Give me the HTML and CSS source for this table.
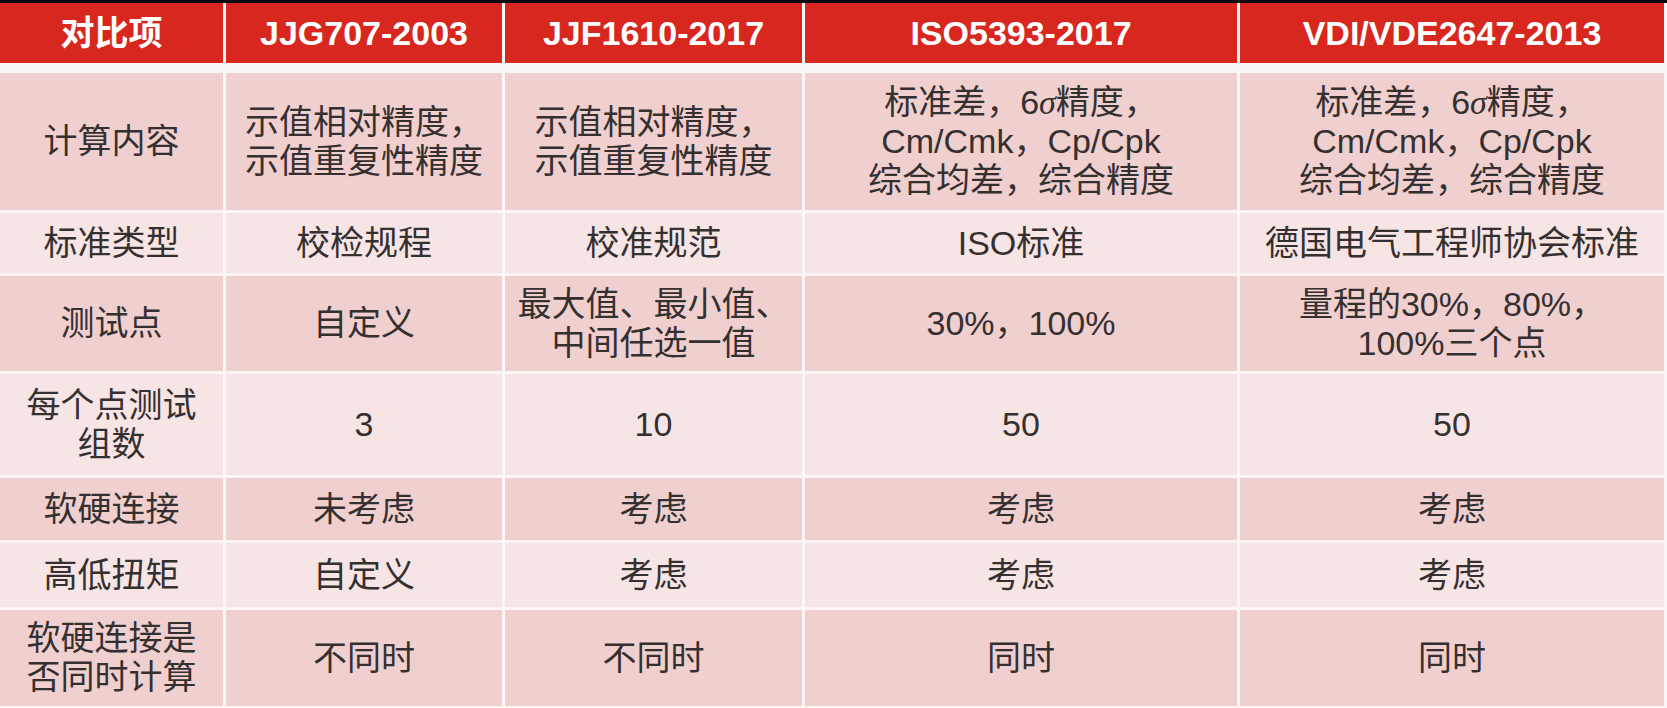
FILE: index.html
```html
<!DOCTYPE html>
<html lang="zh-CN">
<head>
<meta charset="utf-8">
<title>标准对比</title>
<link rel="stylesheet" href="styles.css">
</head>
<body>
<div class="table">
  <div class="cell head"><span>对比项</span></div>
  <div class="cell head"><span>JJG707-2003</span></div>
  <div class="cell head"><span>JJF1610-2017</span></div>
  <div class="cell head"><span>ISO5393-2017</span></div>
  <div class="cell head"><span>VDI/VDE2647-2013</span></div>

  <div class="cell dark"><span>计算内容</span></div>
  <div class="cell dark"><span>示值相对精度，<br>示值重复性精度</span></div>
  <div class="cell dark"><span>示值相对精度，<br>示值重复性精度</span></div>
  <div class="cell dark"><span>标准差，6<i class="sigma">σ</i>精度，<br>Cm/Cmk，Cp/Cpk<br>综合均差，综合精度</span></div>
  <div class="cell dark"><span>标准差，6<i class="sigma">σ</i>精度，<br>Cm/Cmk，Cp/Cpk<br>综合均差，综合精度</span></div>

  <div class="cell light"><span>标准类型</span></div>
  <div class="cell light"><span>校检规程</span></div>
  <div class="cell light"><span>校准规范</span></div>
  <div class="cell light"><span>ISO标准</span></div>
  <div class="cell light"><span>德国电气工程师协会标准</span></div>

  <div class="cell dark"><span>测试点</span></div>
  <div class="cell dark"><span>自定义</span></div>
  <div class="cell dark"><span>最大值、最小值、<br>中间任选一值</span></div>
  <div class="cell dark"><span>30%，100%</span></div>
  <div class="cell dark"><span>量程的30%，80%，<br>100%三个点</span></div>

  <div class="cell light"><span>每个点测试<br>组数</span></div>
  <div class="cell light"><span>3</span></div>
  <div class="cell light"><span>10</span></div>
  <div class="cell light"><span>50</span></div>
  <div class="cell light"><span>50</span></div>

  <div class="cell dark"><span>软硬连接</span></div>
  <div class="cell dark"><span>未考虑</span></div>
  <div class="cell dark"><span>考虑</span></div>
  <div class="cell dark"><span>考虑</span></div>
  <div class="cell dark"><span>考虑</span></div>

  <div class="cell light"><span>高低扭矩</span></div>
  <div class="cell light"><span>自定义</span></div>
  <div class="cell light"><span>考虑</span></div>
  <div class="cell light"><span>考虑</span></div>
  <div class="cell light"><span>考虑</span></div>

  <div class="cell dark"><span>软硬连接是<br>否同时计算</span></div>
  <div class="cell dark"><span>不同时</span></div>
  <div class="cell dark"><span>不同时</span></div>
  <div class="cell dark"><span>同时</span></div>
  <div class="cell dark"><span>同时</span></div>
</div>
</body>
</html>
```

FILE: styles.css
```css
html, body {
  margin: 0;
  padding: 0;
  background: #fdf6f6;
}

body {
  border-top: 3px solid #0a0a0a;
  height: 705px;
  overflow: hidden;
  font-family: "Liberation Sans", "Noto Sans CJK SC", sans-serif;
}

.table {
  display: grid;
  grid-template-columns: 223px 276px 297px 432px 424px;
  grid-template-rows: 67px 137px 60px 95px 101px 62px 64px 96px;
  column-gap: 3px;
  row-gap: 3px;
  width: 1664px;
  background: #fdf6f6;
}

.cell {
  display: flex;
  align-items: center;
  justify-content: center;
  text-align: center;
  font-size: 34px;
  line-height: 39px;
  color: #353030;
  white-space: nowrap;
}

.head {
  background: #d7271e;
  color: #ffffff;
  font-weight: bold;
  font-size: 34px;
  margin-bottom: 7px;
}

.dark {
  background: #f0cfcf;
}

.light {
  background: #f7e4e4;
}

.sigma {
  font-family: "Liberation Serif", serif;
  font-style: italic;
}
```
